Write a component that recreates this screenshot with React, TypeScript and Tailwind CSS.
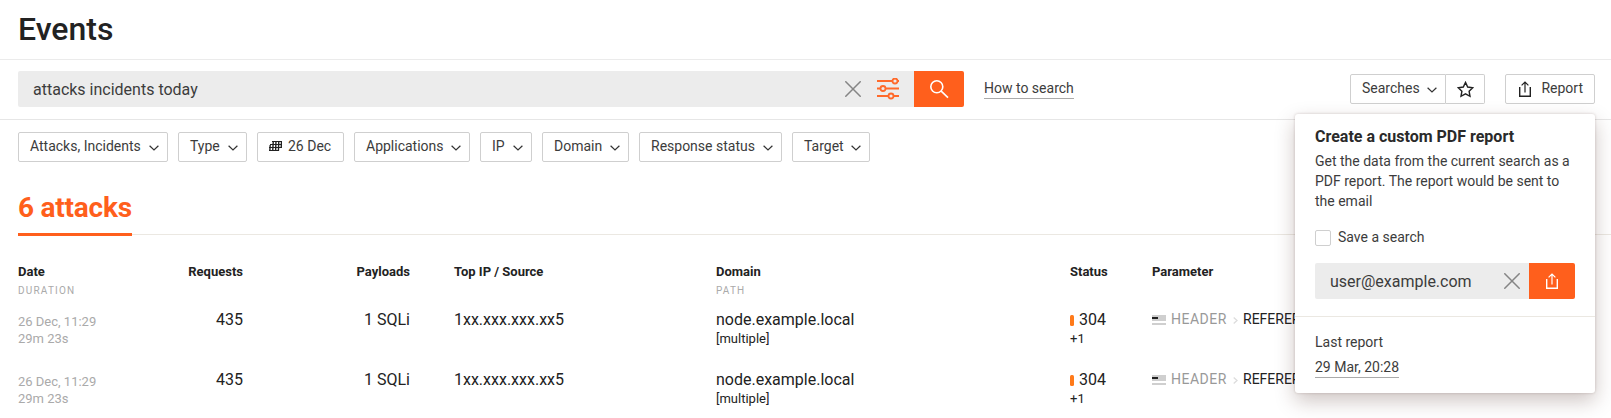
import React from "react";

function Chevron() {
  return (
    <svg width="10" height="6" viewBox="0 0 10 6" fill="none" stroke="#333" strokeWidth="1.2" className="mt-[3px] shrink-0">
      <path d="M0.6 0.7 L5 5 L9.4 0.7" />
    </svg>
  );
}

function Cross() {
  return (
    <svg width="16" height="16" viewBox="0 0 16 16" stroke="#858585" strokeWidth="1.5" className="shrink-0">
      <path d="M0.3 0.3 L15.7 15.7 M15.7 0.3 L0.3 15.7" />
    </svg>
  );
}

function Sliders() {
  return (
    <svg width="22" height="22" viewBox="0 0 22 22" fill="#ececec" stroke="#ff6a2b" strokeWidth="1.8" className="shrink-0">
      <path d="M0 3 H22 M0 10.5 H22 M0 18 H22" />
      <circle cx="18" cy="3" r="2.5" />
      <circle cx="6" cy="10.5" r="2.5" />
      <circle cx="14" cy="18" r="2.5" />
    </svg>
  );
}

function Magnifier() {
  return (
    <svg width="20" height="20" viewBox="0 0 20 20" fill="none" stroke="#fff" strokeWidth="1.6">
      <circle cx="7.8" cy="7.8" r="6" />
      <path d="M12.2 12.2 L19 18.6" />
    </svg>
  );
}

function Upload({ color }: { color: string }) {
  return (
    <svg width="12" height="16" viewBox="0 0 12 16" fill="none" stroke={color} strokeWidth="1.4" className="shrink-0">
      <path d="M0.7 6 V15.3 H11.3 V6" />
      <path d="M6 11.5 V1.2 M2.6 4.4 L6 1 L9.4 4.4" strokeWidth="1.2" />
    </svg>
  );
}

function Star() {
  return (
    <svg width="17" height="17" viewBox="0 0 17 17" fill="none" stroke="#222" strokeWidth="1.4">
      <path d="M8.5 1.4 L10.7 6 L15.8 6.7 L12.1 10.2 L13 15.3 L8.5 12.9 L4 15.3 L4.9 10.2 L1.2 6.7 L6.3 6 Z" />
    </svg>
  );
}

function Calendar() {
  return (
    <svg width="13" height="12" viewBox="0 0 13 12" stroke="#222" fill="none" className="shrink-0">
      <path d="M3 1.5 H13 M1 4.5 H13 M0 7.5 H13 M0 10.5 H10" strokeWidth="1.1" />
      <path d="M1.2 5 L0.8 11 M4.3 1 L3.7 11 M7 1 L6.6 11 M9.8 1 L9.4 11 M12.5 1 L12.2 8" strokeWidth="1.4" />
    </svg>
  );
}

const box = "flex h-[30px] items-center rounded-[2px] border border-[#cfcfcf] bg-white pb-0.5 text-sm";

function Filter({ label, className }: { label: string; className: string }) {
  return (
    <div className={`${box} ${className} justify-between pr-2 pl-[11px]`}>
      <span className="whitespace-nowrap">{label}</span>
      <Chevron />
    </div>
  );
}

const head = "text-[13px] leading-5 font-bold text-[#222]";
const sub = "text-[10px] leading-4 tracking-[1.2px] text-[#aaa]";
const columns = "grid grid-cols-[225px_167px_44px_262px_354px_82px_1fr]";

function EventRow() {
  return (
    <div className={`${columns} h-[60px] text-base leading-5 text-[#222]`}>
      <div className="flex justify-between">
        <div className="pt-[3px] text-[13px] leading-[17px] text-[#aaa]">
          <div>26 Dec, 11:29</div>
          <div>29m 23s</div>
        </div>
        <div>435</div>
      </div>
      <div className="text-right">1 SQLi</div>
      <div />
      <div>1xx.xxx.xxx.xx5</div>
      <div>
        <div>node.example.local</div>
        <div className="text-[13px] leading-[17px]">[multiple]</div>
      </div>
      <div>
        <div className="flex items-center">
          <span className="mr-[5px] h-[11px] w-1 rounded-[1.5px] bg-[#ff7a1a]" />
          304
        </div>
        <div className="text-[13px] leading-[17px]">+1</div>
      </div>
      <div className="flex h-[18px] items-center text-sm">
        <svg width="14" height="10" viewBox="0 0 14 10" className="mt-0.5 mr-[5px]">
          <path fill="#cfcfcf" d="M0 0h14v6H0zM0 8h14v2H0z" />
          <path fill="#222" d="M0 2h6v2H0z" />
        </svg>
        <span className="w-[56px] tracking-[0.5px] text-[#999]">HEADER</span>
        <svg width="5" height="7" viewBox="0 0 5 7" fill="none" stroke="#ddd" strokeWidth="1.3" className="mt-[3px] mr-[5px] ml-[6px]">
          <path d="M0.7 0.5 L4 3.5 L0.7 6.5" />
        </svg>
        <span>REFERER</span>
      </div>
    </div>
  );
}

function ReportPopup() {
  return (
    <div className="absolute top-[114px] right-4 h-[279px] w-[300px] rounded-[3px] bg-white pt-[13px] text-sm leading-5 shadow-[0_8px_20px_rgba(60,25,15,0.25),0_0_3px_rgba(60,25,15,0.2)]">
      <div className="px-5">
        <h2 className="text-base leading-5 font-bold text-[#2a2a2a]">Create a custom PDF report</h2>
        <p className="mt-[4px] whitespace-nowrap">
          Get the data from the current search as a
          <br />
          PDF report. The report would be sent to
          <br />
          the email
        </p>
        <div className="mt-[16px] flex h-5 items-center">
          <span className="mt-0.5 mr-[7px] size-4 rounded-[2px] border border-[#cfcfcf]" />
          Save a search
        </div>
        <div className="mt-4 flex h-9 overflow-hidden rounded-[2px]">
          <div className="flex flex-1 items-center justify-between bg-[#ececec] pr-[9px] pl-[15px] text-base">
            <span className="pt-0.5">user@example.com</span>
            <Cross />
          </div>
          <div className="flex w-[46px] items-center justify-center bg-[#ff5f1c]">
            <Upload color="#fff" />
          </div>
        </div>
      </div>
      <div className="mt-[17px] border-t border-[#ebe8e2] px-5 pt-[15px]">
        <div>Last report</div>
        <div className="mt-[7px] inline-block border-b border-[#aaa] pb-0.5 leading-4">29 Mar, 20:28</div>
      </div>
    </div>
  );
}

export default function App() {
  return (
    <div className="relative h-[418px] w-full overflow-hidden bg-white font-[Roboto,sans-serif] text-[#3c3c3c]">
      <header className="h-[60px] border-b border-[#ebebeb] pt-[5px] pl-[18px]">
        <h1 className="text-[32px] leading-[48px] font-medium text-[#222]">Events</h1>
      </header>
      <div className="flex h-[60px] items-center justify-between border-b border-[#e6e6e6] pr-4 pb-px pl-[18px]">
        <div className="flex items-center">
          <div className="flex h-9 w-[946px] overflow-hidden rounded-[2px]">
            <div className="flex flex-1 items-center bg-[#ececec] pr-[15px] pl-[15px]">
              <span className="flex-1 pt-0.5 text-base">attacks incidents today</span>
              <Cross />
              <span className="w-4" />
              <Sliders />
            </div>
            <div className="flex w-[50px] items-center justify-center bg-[#ff5f1c]">
              <Magnifier />
            </div>
          </div>
          <a className="ml-5 border-b border-[#aaa] pb-0.5 text-sm leading-4">How to search</a>
        </div>
        <div className="flex">
          <div className={`${box} w-[96px] justify-between rounded-r-none pr-2 pl-[11px]`}>
            Searches
            <Chevron />
          </div>
          <div className={`${box} w-[39px] justify-center rounded-l-none border-l-0`}>
            <span className="pt-0.5">
              <Star />
            </span>
          </div>
          <div className={`${box} ml-5 w-[90px] justify-between pr-[11px] pl-[13px]`}>
            <span className="pt-0.5">
              <Upload color="#222" />
            </span>
            Report
          </div>
        </div>
      </div>
      <div className="flex gap-[10px] pt-3 pl-[18px]">
        <Filter label="Attacks, Incidents" className="w-[150px]" />
        <Filter label="Type" className="w-[69px]" />
        <div className={`${box} w-[87px] gap-[6px] pl-[11px] whitespace-nowrap`}>
          <Calendar />
          26 Dec
        </div>
        <Filter label="Applications" className="w-[116px]" />
        <Filter label="IP" className="w-[52px]" />
        <Filter label="Domain" className="w-[87px]" />
        <Filter label="Response status" className="w-[143px]" />
        <Filter label="Target" className="w-[78px]" />
      </div>
      <div className="mt-[29px] ml-[18px] flex h-[45px] items-end">
        <div className="h-[45px] w-[114px] border-b-3 border-[#ff5f1c] text-[28px] leading-[34px] font-bold tracking-[-0.22px] whitespace-nowrap text-[#ff5f1c]">
          6 attacks
        </div>
        <div className="mb-px h-px flex-1 bg-[#ebe8e2]" />
      </div>
      <div className="pt-[26px] pl-[18px]">
        <div className={`${columns} h-12`}>
          <div className="flex justify-between">
            <div>
              <div className={head}>Date</div>
              <div className={`${sub} mt-px`}>DURATION</div>
            </div>
            <div className={head}>Requests</div>
          </div>
          <div className={`${head} text-right`}>Payloads</div>
          <div />
          <div className={head}>Top IP / Source</div>
          <div>
            <div className={head}>Domain</div>
            <div className={`${sub} mt-px`}>PATH</div>
          </div>
          <div className={head}>Status</div>
          <div className={head}>Parameter</div>
        </div>
        <EventRow />
        <EventRow />
      </div>
      <ReportPopup />
    </div>
  );
}
